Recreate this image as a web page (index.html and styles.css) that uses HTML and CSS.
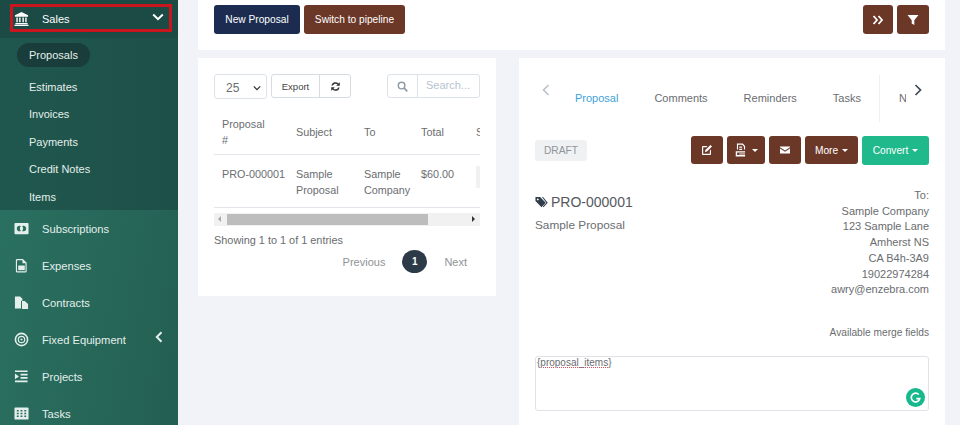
FILE: index.html
```html
<!DOCTYPE html>
<html lang="en">
<head>
    <meta charset="UTF-8">
    <title>Proposals</title>
    <link rel="stylesheet" href="styles.css">
</head>
<body>
<div class="app">
    <aside class="sidebar">
        <div class="sales-row">
            <a class="sales-link">
                <svg class="nav-icon" viewBox="0 0 16 16"><path d="M8 1 1 4.600V6h14V4.600zM2.500 7v5H4V7zm3 0v5H7V7zm3.500 0v5h1.500V7zm3 0v5h1.500V7zM1.500 12.800V14h13v-1.200zM.5 14.600V16h15v-1.400z"/></svg>
                <span>Sales</span>
                <svg class="chev-down" viewBox="0 0 12 8"><path d="M1.200 1.500 6 6.200l4.800-4.700" fill="none" stroke="currentColor" stroke-width="2"/></svg>
            </a>
        </div>
        <ul class="submenu">
            <li class="sub-active"><span>Proposals</span></li>
            <li>Estimates</li>
            <li>Invoices</li>
            <li>Payments</li>
            <li>Credit Notes</li>
            <li>Items</li>
        </ul>
        <ul class="nav">
            <li>
                <svg class="nav-icon" viewBox="0 0 16 16"><path fill-rule="evenodd" d="M1.500 2h13a1 1 0 0 1 1 1v10a1 1 0 0 1-1 1h-13a1 1 0 0 1-1-1V3a1 1 0 0 1 1-1zM6 5a3 3 0 1 0 0 6 3 3 0 0 0 1.300-.3 4.500 4.500 0 0 1 0-5.400A3 3 0 0 0 6 5zm4 0a3 3 0 0 0-1.300.3 4.500 4.500 0 0 1 0 5.400A3 3 0 1 0 10 5z"/></svg>
                <span>Subscriptions</span>
            </li>
            <li>
                <svg class="nav-icon" viewBox="0 0 16 16"><path fill-rule="evenodd" d="M3.500 1h6L13.500 5v9a1.500 1.500 0 0 1-1.500 1.500H3.500A1.500 1.500 0 0 1 2 14V2.500A1.500 1.500 0 0 1 3.500 1zm0 1.300a.3.3 0 0 0-.3.3V14c0 .1.100.2.300.2H12a.3.3 0 0 0 .3-.2V5.500H9V2.300z"/><path d="M4.500 8h7v5h-7z"/></svg>
                <span>Expenses</span>
            </li>
            <li>
                <svg class="nav-icon" viewBox="0 0 16 16"><path d="M1 1.500h5.500L9 4v2.200H7.500v8.300H1zM8.500 6.500h3L15 9.500V15H8.500z"/></svg>
                <span>Contracts</span>
            </li>
            <li>
                <svg class="nav-icon" viewBox="0 0 16 16"><circle cx="8" cy="8" r="6.500" fill="none" stroke="currentColor" stroke-width="1.700"/><circle cx="8" cy="8" r="3.400" fill="none" stroke="currentColor" stroke-width="1.300"/><circle cx="8" cy="8" r="1.100"/></svg>
                <span>Fixed Equipment</span>
                <svg class="chev-left" viewBox="0 0 8 12"><path d="M6.500 1.200 1.800 6l4.700 4.800" fill="none" stroke="currentColor" stroke-width="2"/></svg>
            </li>
            <li>
                <svg class="nav-icon" viewBox="0 0 16 16"><path d="M1 1.500h13.500v1.800H1zM7 5h7.500v1.800H7zM7 8.500h7.500v1.800H7zM1 12.200h13.500V14H1zM1 4.700l4.300 3.200L1 11z"/></svg>
                <span>Projects</span>
            </li>
            <li>
                <svg class="nav-icon" viewBox="0 0 16 16"><path fill-rule="evenodd" d="M1.500 1.500h13a1 1 0 0 1 1 1v11a1 1 0 0 1-1 1h-13a1 1 0 0 1-1-1v-11a1 1 0 0 1 1-1zM3 4.200v1.600h2V4.200zm4 0v1.600h2V4.200zm4 0v1.600h2V4.200zM3 7.200v1.600h2V7.200zm4 0v1.600h2V7.200zm4 0v1.600h2V7.200zM3 10.200v1.600h2v-1.600zm4 0v1.600h2v-1.600zm4 0v1.600h2v-1.600z"/></svg>
                <span>Tasks</span>
            </li>
        </ul>
    </aside>

    <main class="content">
        <section class="panel toolbar">
            <button class="btn btn-navy btn-new">New Proposal</button>
            <button class="btn btn-brown btn-switch">Switch to pipeline</button>
            <div class="toolbar-right">
                <button class="btn btn-brown btn-square btn-narrow">
                    <svg class="btn-icon" viewBox="0 0 12 12"><path d="M1.500 2 5 6l-3.500 4M6.500 2 10 6l-3.500 4" fill="none" stroke="currentColor" stroke-width="1.800"/></svg>
                </button>
                <button class="btn btn-brown btn-square">
                    <svg class="btn-icon" viewBox="0 0 12 12"><path d="M.5 1h11L7.300 6.200V11L4.700 9.500V6.200z"/></svg>
                </button>
            </div>
        </section>

        <div class="columns">
            <section class="panel list-panel">
                <div class="list-controls">
                    <div class="select-box"><span>25</span><svg class="select-caret" viewBox="0 0 10 6"><path d="M1 1l4 4 4-4" fill="none" stroke="currentColor" stroke-width="1.600"/></svg></div>
                    <div class="btn-pair">
                        <span class="pair-btn">Export</span>
                        <span class="pair-btn pair-icon">
                            <svg viewBox="0 0 12 12"><path d="M1.500 5a4.500 4.500 0 0 1 7.700-2.300L10.700 1.300v4H6.700l1.500-1.500A3 3 0 0 0 3.200 5zM10.500 7a4.500 4.500 0 0 1-7.700 2.300L1.300 10.700v-4h4L3.800 8.200A3 3 0 0 0 8.800 7z"/></svg>
                        </span>
                    </div>
                    <div class="search-box">
                        <span class="search-icon"><svg viewBox="0 0 12 12"><circle cx="5" cy="5" r="3.600" fill="none" stroke="currentColor" stroke-width="1.600"/><path d="M7.800 7.800l3.400 3.400" stroke="currentColor" stroke-width="1.900"/></svg></span>
                        <span class="search-text">Search...</span>
                    </div>
                </div>
                <div class="table-wrap">
                    <table class="list-table">
                        <thead>
                            <tr><th class="col-id">Proposal<br>#</th><th class="col-subject">Subject</th><th class="col-to">To</th><th class="col-total">Total</th><th>Status</th></tr>
                        </thead>
                        <tbody>
                            <tr><td class="nowrap">PRO-000001</td><td>Sample Proposal</td><td>Sample Company</td><td>$60.00</td><td><span class="cut-chip"></span></td></tr>
                        </tbody>
                    </table>
                </div>
                <div class="hscroll">
                    <span class="arrow-left"></span>
                    <span class="hscroll-thumb"></span>
                    <span class="arrow-right"></span>
                </div>
                <div class="entries">Showing 1 to 1 of 1 entries</div>
                <div class="pager">
                    <span>Previous</span>
                    <span class="page-current">1</span>
                    <span>Next</span>
                </div>
            </section>

            <section class="panel detail-panel">
                <div class="tabs">
                    <svg class="tab-arrow tab-arrow-off" viewBox="0 0 8 12"><path d="M6.500 1 1.500 6l5 5" fill="none" stroke="currentColor" stroke-width="1.500"/></svg>
                    <div class="tab-list">
                        <span class="tab tab-active">Proposal</span>
                        <span class="tab">Comments</span>
                        <span class="tab">Reminders</span>
                        <span class="tab">Tasks</span>
                        <span class="tab tab-cut"><span>Notes</span></span>
                    </div>
                    <svg class="tab-arrow" viewBox="0 0 8 12"><path d="M1.500 1l5 5-5 5" fill="none" stroke="currentColor" stroke-width="1.700"/></svg>
                </div>

                <div class="actions">
                    <span class="draft">DRAFT</span>
                    <div class="action-btns">
                        <button class="btn btn-brown btn-action">
                            <svg class="btn-icon" viewBox="0 0 12 12"><path fill-rule="evenodd" d="M2 2h4.500L5.300 3.200H2.200v6.600h6.600V6.700L10 5.500V10a1 1 0 0 1-1 1H2a1 1 0 0 1-1-1V3a1 1 0 0 1 1-1z"/><path d="M4.300 6 9.500 1 11 2.500 6 7.600l-2 .3z"/></svg>
                        </button>
                        <button class="btn btn-brown btn-action">
                            <svg class="btn-icon btn-icon-doc" viewBox="0 0 12 12"><path fill-rule="evenodd" d="M2.500.5h5L9.500 2.500v3h-1V3L7 1.500H3.500v4h-1z"/><path d="M4.500 3h2.500v1H4.500zM4.500 5h2.500v1H4.500zM1.500 7h8v1.200H2.700v2h6.800v1.300h-8z"/><path d="M4.500 9h5v.8h-5z"/></svg>
                            <i class="caret"></i>
                        </button>
                        <button class="btn btn-brown btn-action">
                            <svg class="btn-icon" viewBox="0 0 12 12"><path d="M1 2.500h10v.8L6 6.500 1 3.300zM1 4.500l5 3.200 5-3.200v5H1z"/></svg>
                        </button>
                        <button class="btn btn-brown btn-action">More <i class="caret"></i></button>
                        <button class="btn btn-green btn-action">Convert <i class="caret"></i></button>
                    </div>
                </div>

                <div class="proposal-info">
                    <div class="proposal-head">
                        <h4 class="proposal-no">
                            <svg class="tag-icon" viewBox="0 0 14 14"><path fill-rule="evenodd" d="M.5 1h5l6 6.200-4.500 4.800L.5 5.500zM3 2.700a1 1 0 1 0 0 2 1 1 0 0 0 0-2z"/><path d="M7.500 1h1.200l5 6.200-4.500 4.800-.8-.7 3.800-4.100z"/></svg>
                            PRO-000001
                        </h4>
                        <p class="proposal-sub">Sample Proposal</p>
                    </div>
                    <address class="to-block">
                        To:<br>Sample Company<br>123 Sample Lane<br>Amherst NS<br>CA B4h-3A9<br>19022974284<br>awry@enzebra.com
                    </address>
                </div>

                <div class="merge-link">Available merge fields</div>
                <div class="editor">
                    <span class="editor-text">{proposal_items}</span>
                    <span class="grammarly">
                        <svg viewBox="0 0 12 12"><path d="M9 3.200A4 4 0 1 0 10 7H6.800" fill="none" stroke="#fff" stroke-width="1.500"/></svg>
                    </span>
                </div>
            </section>
        </div>
    </main>
</div>
</body>
</html>
```

FILE: styles.css
```css
* { box-sizing: border-box; }
html, body { margin: 0; height: 425px; overflow: hidden; }
body { font-family: "Liberation Sans", Arial, sans-serif; font-size: 11px; color: #6a6d70; background: #f1f3f8; }
ul { list-style: none; margin: 0; padding: 0; }
button { font-family: inherit; }

.app { display: flex; height: 425px; overflow: hidden; }

/* sidebar */
.sidebar { width: 178px; flex: none; color: #e4efeb; background: #26695a; font-size: 11px; overflow: hidden; }
.sales-row { height: 38px; padding: 4px 6px 6px 10px; background: #1c4a45; }
.sales-link { display: flex; align-items: center; height: 28px; padding: 1px 5px 0 1px; border: 3px solid #c9151e; color: #fff; }
.sales-link span { margin-left: 13px; flex: 1; }
.nav-icon { width: 15px; height: 15px; fill: currentColor; flex: none; }
.chev-down { width: 12px; height: 8px; margin-top: -4px; }
.submenu { height: 172px; padding-top: 4px; background: linear-gradient(90deg, #1f574e, #1e5048); }
.submenu li { height: 27.400px; line-height: 27px; padding-left: 29px; }
.submenu .sub-active { height: 28px; padding-left: 17px; margin-bottom: 4px; }
.sub-active span { display: inline-block; height: 24px; line-height: 24px; padding: 0 12px; border-radius: 12px; background: #183d3a; }
.nav { background: linear-gradient(100deg, #2a7060, #235f52); font-size: 11.200px; }
.nav li { display: flex; align-items: center; height: 37px; padding-left: 14px; }
.nav li span { margin-left: 13px; flex: 1; }
.chev-left { width: 8px; height: 12px; margin: -5px 15px 0 0; }

/* main */
.content { flex: 1; padding: 0 15px 0 20px; min-width: 0; }
.panel { background: #fff; }
.toolbar { display: flex; align-items: flex-start; gap: 4px; height: 50px; padding: 5px 16px 0 16px; }
.toolbar-right { display: flex; gap: 4px; margin-left: auto; }

.btn { height: 29px; padding: 0 10px; border: 0; border-radius: 3px; color: #fff; font-size: 10.200px; display: inline-flex; align-items: center; justify-content: center; gap: 4px; }
.btn-navy { background: #1c2c50; }
.btn-brown { background: #6b3828; }
.btn-green { background: #1fb98c; }
.btn-new { width: 86px; padding: 0; }
.btn-switch { width: 101px; padding: 0; }
.btn-square { width: 32px; padding: 0; }
.btn-narrow { width: 30px; }
.btn-icon { width: 12px; height: 12px; fill: currentColor; }
.btn-icon-doc { width: 14px; height: 14px; }
.caret { width: 0; height: 0; border: 3px solid transparent; border-top-color: currentColor; border-bottom: 0; }

.columns { display: flex; align-items: flex-start; gap: 23px; margin-top: 8px; }

/* proposals table */
.list-panel { width: 298px; height: 238px; padding: 16px; flex: none; }
.list-controls { display: flex; align-items: flex-start; height: 25px; }
.select-box { display: flex; align-items: center; justify-content: space-between; width: 53px; height: 25px; padding: 2px 5px 0 11px; border: 1px solid #dde2e8; border-radius: 3px; font-size: 12px; }
.select-caret { width: 8px; height: 6px; color: #333; }
.btn-pair { display: flex; height: 24px; margin-left: 4px; border: 1px solid #d6dce2; border-radius: 3px; color: #444; font-size: 9.500px; }
.pair-btn { display: flex; align-items: center; width: 47px; justify-content: center; }
.pair-icon { width: 31px; border-left: 1px solid #d6dce2; }
.pair-icon svg { width: 11px; height: 11px; fill: #333; }
.search-box { display: flex; height: 24px; margin-left: auto; width: 93px; border: 1px solid #dde2e8; border-radius: 3px; }
.search-icon { display: flex; align-items: center; justify-content: center; width: 30px; border-right: 1px solid #dde2e8; color: #8d9aa8; }
.search-icon svg { width: 11px; height: 11px; }
.search-text { padding-left: 8px; line-height: 21px; color: #b8c3d0; font-size: 11px; }

.table-wrap { overflow: hidden; margin-top: 5px; }
.list-table { border-collapse: collapse; table-layout: fixed; width: 310px; font-size: 10.800px; line-height: 16px; }
.list-table th { height: 50px; padding: 7px 8px 0; font-weight: normal; text-align: left; border-bottom: 1px solid #e3e7ec; vertical-align: middle; }
.list-table td { height: 53px; padding: 11px 8px 0; vertical-align: top; border-bottom: 1px solid #e3e7ec; }
.list-table .nowrap { white-space: nowrap; }
.col-id { width: 74px; }
.col-subject { width: 68px; }
.col-to { width: 57px; }
.col-total { width: 55px; }
.cut-chip { display: block; width: 20px; height: 22px; background: #f0f1f3; }

.hscroll { display: flex; align-items: center; height: 13px; margin-top: 5px; background: #f1f1f1; }
.hscroll-thumb { width: 201px; height: 11px; margin-left: 6px; background: #bdbdbd; }
.arrow-left { width: 0; height: 0; margin-left: 4px; border: 3px solid transparent; border-right-color: #a8a8a8; border-left: 0; }
.arrow-right { width: 0; height: 0; margin: 0 5px 0 auto; border: 3px solid transparent; border-left-color: #333; border-right: 0; }
.entries { margin-top: 7px; font-size: 10.900px; line-height: 14px; }
.pager { display: flex; align-items: center; justify-content: flex-end; gap: 17px; height: 24px; margin-top: 3px; padding-right: 13px; color: #8f9396; font-size: 11px; }
.page-current { width: 25px; height: 23px; line-height: 23px; border-radius: 50%; text-align: center; background: #2c3b47; color: #fff; font-size: 10px; font-weight: bold; }

/* proposal detail */
.detail-panel { flex: 1; min-width: 0; height: 367px; padding: 17px 16px 0; }
.tabs { display: flex; align-items: flex-start; height: 47px; }
.tab-arrow { width: 8px; height: 12px; margin-top: 9px; flex: none; color: #3c4a57; }
.tab-arrow-off { margin-left: 7px; color: #b9bfc5; }
.tab-list { display: flex; width: 344px; height: 47px; flex: none; margin: 0 -5px 0 25px; padding-top: 17px; overflow: hidden; font-size: 11px; }
.tab { flex: none; margin-right: 36px; }
.tab-active { color: #3fa2d8; }
.tab-cut { height: 47px; width: 60px; margin: -17px 0 0 -18px; padding: 17px 0 0 19px; border-left: 1px solid #eef0f3; }
.tab-cut span { display: block; width: 7px; overflow: hidden; }

.actions { display: flex; align-items: center; justify-content: space-between; margin-top: 14px; height: 29px; }
.draft { width: 52px; height: 21px; line-height: 21px; border-radius: 3px; text-align: center; background: #f0f1f3; color: #8f959b; font-size: 10.200px; }
.action-btns { display: flex; gap: 4px; }
.btn-action { height: 28px; padding: 0 9px; }
.btn-action:nth-child(1), .btn-action:nth-child(3) { width: 32px; padding: 0; }
.btn-action:nth-child(2) { width: 38px; padding: 0; }
.btn-action:nth-child(4) { width: 53px; padding: 0; }
.btn-green { width: 67px; height: 29px; padding: 0; }

.proposal-info { display: flex; justify-content: space-between; margin-top: 23px; }
.proposal-no { display: flex; align-items: center; gap: 3px; margin: 6px 0 0; height: 16px; font-size: 14px; font-weight: normal; color: #55595d; }
.tag-icon { width: 13px; height: 13px; fill: #2f3d4a; }
.proposal-sub { margin: 8px 0 0; font-size: 11.800px; }
.to-block { font-style: normal; text-align: right; font-size: 11px; line-height: 15.700px; }
.merge-link { margin-top: 28px; text-align: right; font-size: 10.200px; line-height: 14px; }
.editor { position: relative; height: 55px; margin-top: 16px; padding: 0 1px; border: 1px solid #dfe3e8; border-radius: 3px; font-size: 10px; line-height: 12px; }
.editor-text { text-decoration: underline dotted #e0505c 1px; }
.grammarly { position: absolute; right: 3px; bottom: 3px; display: flex; align-items: center; justify-content: center; width: 19px; height: 19px; border-radius: 50%; background: #17b88c; }
.grammarly svg { width: 13px; height: 13px; }
```
